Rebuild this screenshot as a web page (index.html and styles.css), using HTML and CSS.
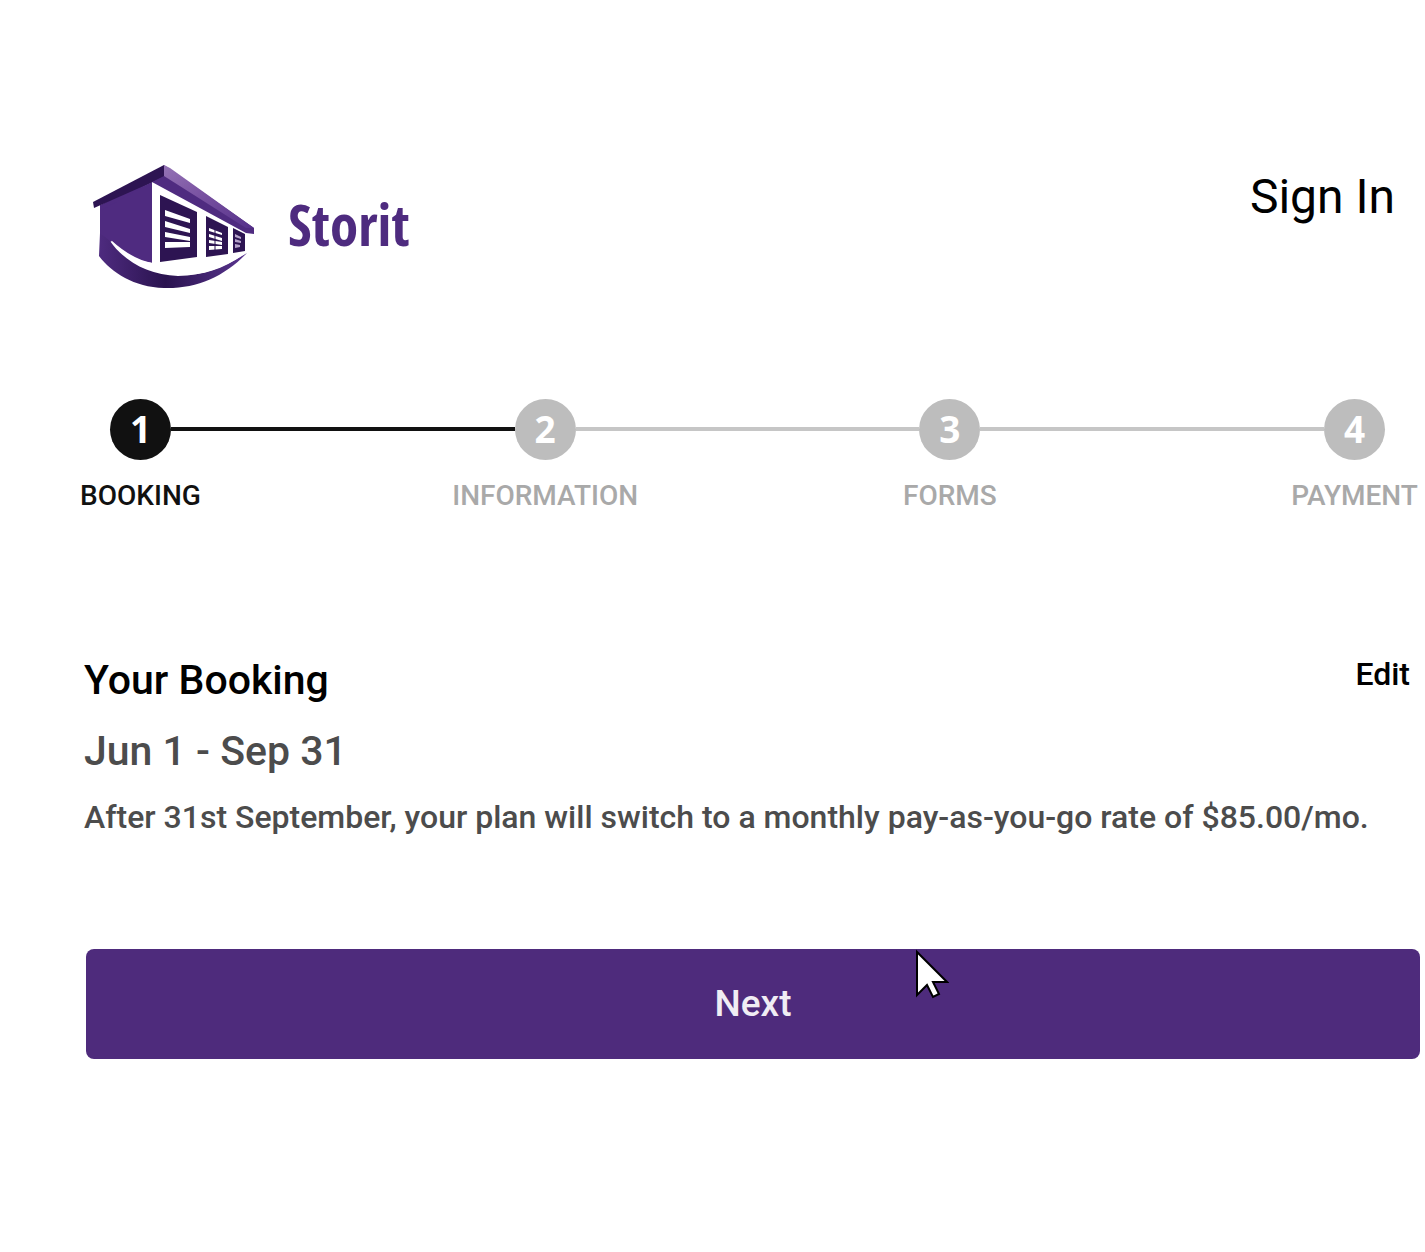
FILE: index.html
```html
<!DOCTYPE html>
<html lang="en">
<head>
  <meta charset="UTF-8" />
  <meta name="viewport" content="width=device-width, initial-scale=1.0" />
  <title>Storit - Your Booking</title>
  <link rel="stylesheet" href="styles.css">
</head>
<body>
  <header class="header">
    <a class="brand" href="#">
      <svg class="logo" viewBox="0 0 190 145" aria-hidden="true">
        <defs>
          <linearGradient id="roof" x1="0" y1="0" x2="1" y2="1">
            <stop offset="0" stop-color="#9473b5" />
            <stop offset=".4" stop-color="#7c55a3" />
            <stop offset="1" stop-color="#55308a" />
          </linearGradient>
          <linearGradient id="base" x1="0" y1="0" x2="1" y2="0">
            <stop offset="0" stop-color="#4e2b7f" />
            <stop offset=".45" stop-color="#2a134f" />
            <stop offset="1" stop-color="#5a3590" />
          </linearGradient>
        </defs>
        <!-- side wall -->
        <path fill="#4f2b80" d="M20 52 L72 27 V108 Q52 104 32 86 L20 92 Z" />
        <!-- base swoosh -->
        <path fill="url(#base)" d="M20 78 L30 86 C44 106 68 120 98 121 C124 121 146 111 167 98 C144 122 116 134 84 133 C54 132 32 118 19 101 Z" />
        <path fill="#fff" d="M31 85 C42 99 56 106 73 108 L167 97 C142 116 119 121 97 120 C66 118 44 104 31 85 Z" />
        <!-- roof -->
        <path fill="#4f2b80" d="M20 50 L84 18 V27 L72 27 L20 56 Z" />
        <path fill="#2d1452" d="M13 47 L84 10 V22 L14 53 Z" />
        <path fill="#4f2b80" d="M72 27 L84 21 V10 L174 73 V79 L166 78 Z" />
        <path fill="url(#roof)" d="M84 10 L90 13 L174 73 L166 73 L84 21 Z" />
        <!-- doors -->
        <path fill="#2d1452" d="M80 40 L117 57 V102 L80 107 Z" />
        <path fill="#2d1452" d="M126 61 L148 72 V99 L126 102 Z" />
        <path fill="#2d1452" d="M153 73 L165 79 V96 L153 98 Z" />
        <path fill="#fff" d="M85 55 L110 64 V68 L85 61 Z M85 66 L110 74 V78 L85 72 Z M85 77 L110 82 V86 L85 82 Z M85 87 L110 87 V92 L85 93 Z" />
        <path fill="#fff" d="M129 73 L142 78 V80 L129 76 Z M129 79 L142 83 V86 L129 82 Z M129 85 L142 87 V90 L129 88 Z M129 91 H142 V94 L129 95 Z" />
        <path fill="none" stroke="#2d1452" d="M135 72 V96" />
        <path fill="#b5a2c9" d="M155 79 L161 82 V84 L155 82 Z M155 84 L161 86 V88 L155 87 Z M155 89 L160 90 V92 L155 93 Z" />
      </svg>
      <span class="brand-name">Storit</span>
    </a>
    <a class="sign-in" href="#">Sign In</a>
  </header>

  <ol class="stepper">
    <li class="step active">
      <span class="circle">1</span>
      <span class="label">BOOKING</span>
    </li>
    <li class="line done" aria-hidden="true"></li>
    <li class="step">
      <span class="circle">2</span>
      <span class="label">INFORMATION</span>
    </li>
    <li class="line" aria-hidden="true"></li>
    <li class="step">
      <span class="circle">3</span>
      <span class="label">FORMS</span>
    </li>
    <li class="line" aria-hidden="true"></li>
    <li class="step">
      <span class="circle">4</span>
      <span class="label">PAYMENT</span>
    </li>
  </ol>

  <main class="booking">
    <div class="booking-head">
      <h1>Your Booking</h1>
      <a class="edit" href="#">Edit</a>
    </div>
    <p class="dates">Jun 1 - Sep 31</p>
    <p class="note">After 31st September, your plan will switch to a monthly pay-as-you-go rate of $85.00/mo.</p>
  </main>

  <footer class="actions">
    <button class="next" type="button">Next
      <svg class="cursor" viewBox="0 0 34 50" aria-hidden="true">
        <path d="M2 3 V46 L12 36 L18 48 L24 45 L18 33 H32 Z" />
      </svg>
    </button>
  </footer>
</body>
</html>
```

FILE: styles.css
```css
* {
  box-sizing: border-box;
}

body {
  margin: 0;
  padding: 155px 5px 0 80px;
  background: #fff;
  color: #000;
  font-family: Roboto, "Liberation Sans", sans-serif;
  font-weight: 500;
}

a {
  color: inherit;
  text-decoration: none;
}

.header {
  display: flex;
  justify-content: space-between;
  align-items: flex-start;
  padding-right: 25px;
}

.brand {
  display: flex;
  align-items: center;
  gap: 18px;
}

.logo {
  width: 190px;
  height: 145px;
}

.brand-name {
  padding-bottom: 8px;
  color: #4e2b7f;
  font-family: "Noto Sans Condensed", "Open Sans Condensed", "Roboto Condensed", Roboto, sans-serif;
  font-size: 57px;
  font-weight: 600;
  line-height: 56px;
}

.sign-in {
  margin-top: 14px;
  font-size: 48px;
  font-weight: 400;
  line-height: 56px;
}

.stepper {
  display: flex;
  margin: 99px 35px 0 30px;
  padding: 0;
  list-style: none;
}

.step {
  display: flex;
  flex-direction: column;
  align-items: center;
  gap: 20px;
  width: 61px;
  color: #a9a9a9;
}

.circle {
  width: 61px;
  height: 61px;
  border-radius: 50%;
  background: #bdbdbd;
  color: #fff;
  font-family: "Open Sans", sans-serif;
  font-size: 37px;
  font-weight: 700;
  line-height: 59px;
  text-align: center;
}

.label {
  font-size: 28px;
  line-height: 32px;
  white-space: nowrap;
}

.active {
  color: #111;
}

.active .circle {
  background: #111;
}

.line {
  flex: 1;
  height: 4px;
  margin-top: 28px;
  background: #c6c6c6;
}

.line.done {
  background: #111;
}

.booking {
  padding-left: 4px;
}

.booking-head {
  display: flex;
  justify-content: space-between;
  margin-top: 144px;
  padding-right: 10px;
}

.booking h1 {
  margin: 0;
  font-size: 41px;
  font-weight: 500;
  line-height: 48px;
}

.edit {
  font-size: 32px;
  line-height: 36px;
}

.dates,
.note {
  margin: 0;
  color: #4c4c4c;
}

.dates {
  margin-top: 23px;
  font-size: 41px;
  line-height: 48px;
}

.note {
  margin-top: 24px;
  font-size: 32px;
  line-height: 36px;
}

.actions {
  margin-top: 114px;
  padding-left: 6px;
}

.next {
  position: relative;
  display: block;
  width: 100%;
  height: 110px;
  padding: 0 0 2px;
  border: none;
  border-radius: 8px;
  background: #4e2b7c;
  color: #f0edf4;
  font: inherit;
  font-size: 37px;
  cursor: pointer;
}

.cursor {
  position: absolute;
  top: 0;
  left: 62%;
  width: 34px;
  height: 50px;
  margin-left: 2px;
  fill: #fff;
  stroke: #000;
  stroke-width: 2;
}
```
